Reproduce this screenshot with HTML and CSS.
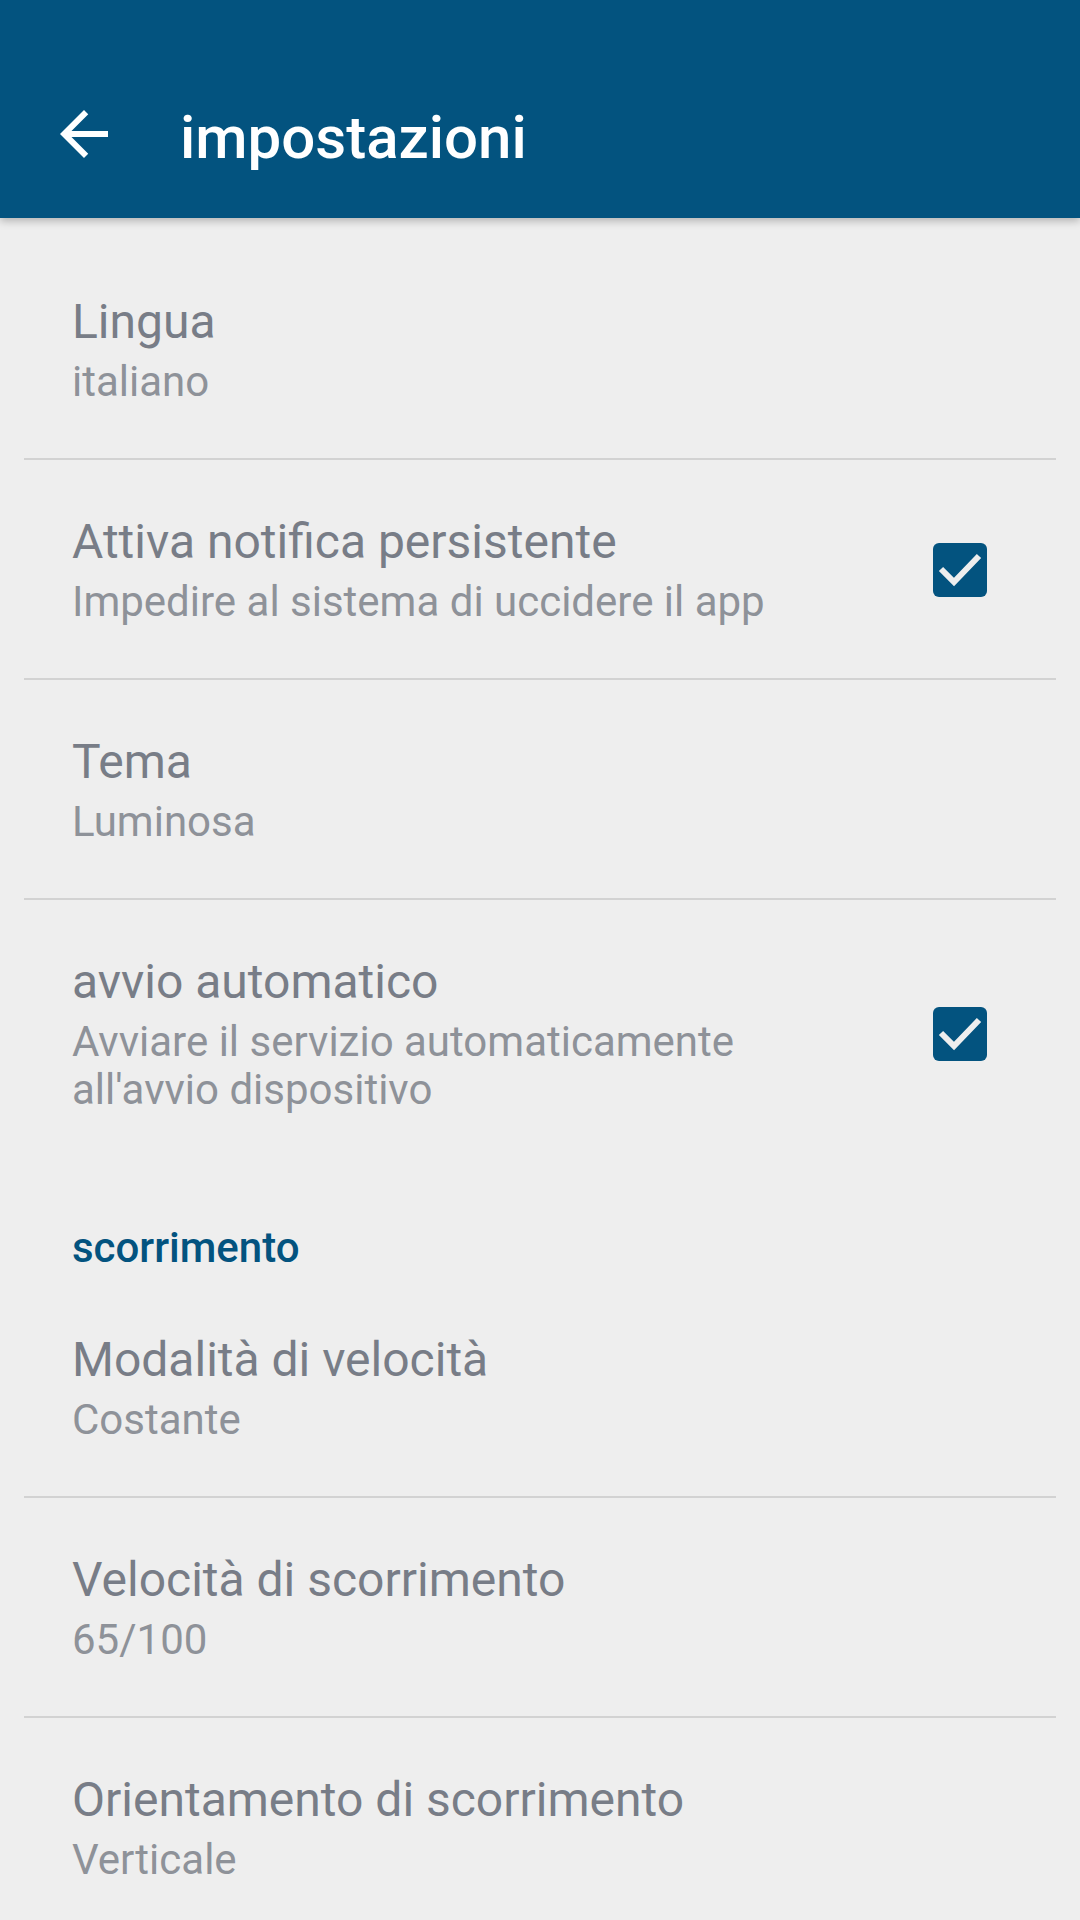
FILE: index.html
```html
<!doctype html>
<html>
    <head>
        <title>impostazioni</title>
        <link rel="stylesheet" href="styles.css">
    </head>
    <body>
        <header class="appbar">
            <div class="toolbar">
                <svg class="back" viewBox="0 0 24 24" width="72" height="72">
                    <path d="M20 11H7.83l5.59-5.59L12 4l-8 8 8 8 1.41-1.41L7.83 13H20v-2z" fill="#ffffff" />
                </svg>
                <span class="appbar-title">impostazioni</span>
            </div>
        </header>

        <main class="prefs">
            <section class="pref">
                <div class="pref-text">
                    <div class="pref-title">Lingua</div>
                    <div class="pref-summary">italiano</div>
                </div>
            </section>
            <hr class="divider" />
            <section class="pref">
                <div class="pref-text">
                    <div class="pref-title">Attiva notifica persistente</div>
                    <div class="pref-summary">Impedire al sistema di uccidere il app</div>
                </div>
                <span class="checkbox">
                    <svg viewBox="0 0 54 54" width="54" height="54">
                        <path d="M8 26 L21 39 L46 13" fill="none" stroke="#eeeeee" stroke-width="6" />
                    </svg>
                </span>
            </section>
            <hr class="divider" />
            <section class="pref">
                <div class="pref-text">
                    <div class="pref-title">Tema</div>
                    <div class="pref-summary">Luminosa</div>
                </div>
            </section>
            <hr class="divider" />
            <section class="pref">
                <div class="pref-text">
                    <div class="pref-title">avvio automatico</div>
                    <div class="pref-summary">Avviare il servizio automaticamente all'avvio dispositivo</div>
                </div>
                <span class="checkbox">
                    <svg viewBox="0 0 54 54" width="54" height="54">
                        <path d="M8 26 L21 39 L46 13" fill="none" stroke="#eeeeee" stroke-width="6" />
                    </svg>
                </span>
            </section>

            <div class="category">scorrimento</div>

            <section class="pref">
                <div class="pref-text">
                    <div class="pref-title">Modalità di velocità</div>
                    <div class="pref-summary">Costante</div>
                </div>
            </section>
            <hr class="divider" />
            <section class="pref">
                <div class="pref-text">
                    <div class="pref-title">Velocità di scorrimento</div>
                    <div class="pref-summary">65/100</div>
                </div>
            </section>
            <hr class="divider" />
            <section class="pref">
                <div class="pref-text">
                    <div class="pref-title">Orientamento di scorrimento</div>
                    <div class="pref-summary">Verticale</div>
                </div>
            </section>
        </main>
    </body>
</html>
```

FILE: styles.css
```css
html,
body {
    margin: 0;
    height: 100%;
    overflow: hidden;
    background: #eeeeee;
    font-family: Roboto, "Noto Sans", sans-serif;
}

.appbar {
    position: relative;
    z-index: 1;
    height: 218px;
    display: flex;
    flex-direction: column;
    justify-content: flex-end;
    background: #03537f;
    box-shadow: 0 3px 8px rgba(0, 0, 0, 0.25);
}

.toolbar {
    height: 168px;
    display: flex;
    align-items: center;
}

.back {
    margin-left: 48px;
    flex-shrink: 0;
}

.appbar-title {
    margin-left: 60px;
    margin-top: 7px;
    color: #ffffff;
    font-size: 60px;
    font-weight: 500;
    line-height: 72px;
}

.prefs {
    padding-top: 22px;
}

.pref {
    display: flex;
    align-items: center;
    padding: 54px 93px 52px 72px;
}

.pref-text {
    flex: 1;
    padding-right: 130px;
}

.pref-title {
    color: #787d87;
    font-size: 48px;
    line-height: 56px;
}

.pref-summary {
    margin-top: 8px;
    color: #8e9299;
    font-size: 42px;
    line-height: 48px;
}

.checkbox {
    width: 54px;
    height: 54px;
    border-radius: 6px;
    background: #03537f;
    flex-shrink: 0;
}

.checkbox svg {
    display: block;
}

.divider {
    margin: 0 24px;
    border: none;
    height: 2px;
    background: #d2d2d2;
}

.category {
    padding: 57px 72px 6px;
    color: #03537f;
    font-size: 42px;
    font-weight: 500;
    line-height: 49px;
}
```
